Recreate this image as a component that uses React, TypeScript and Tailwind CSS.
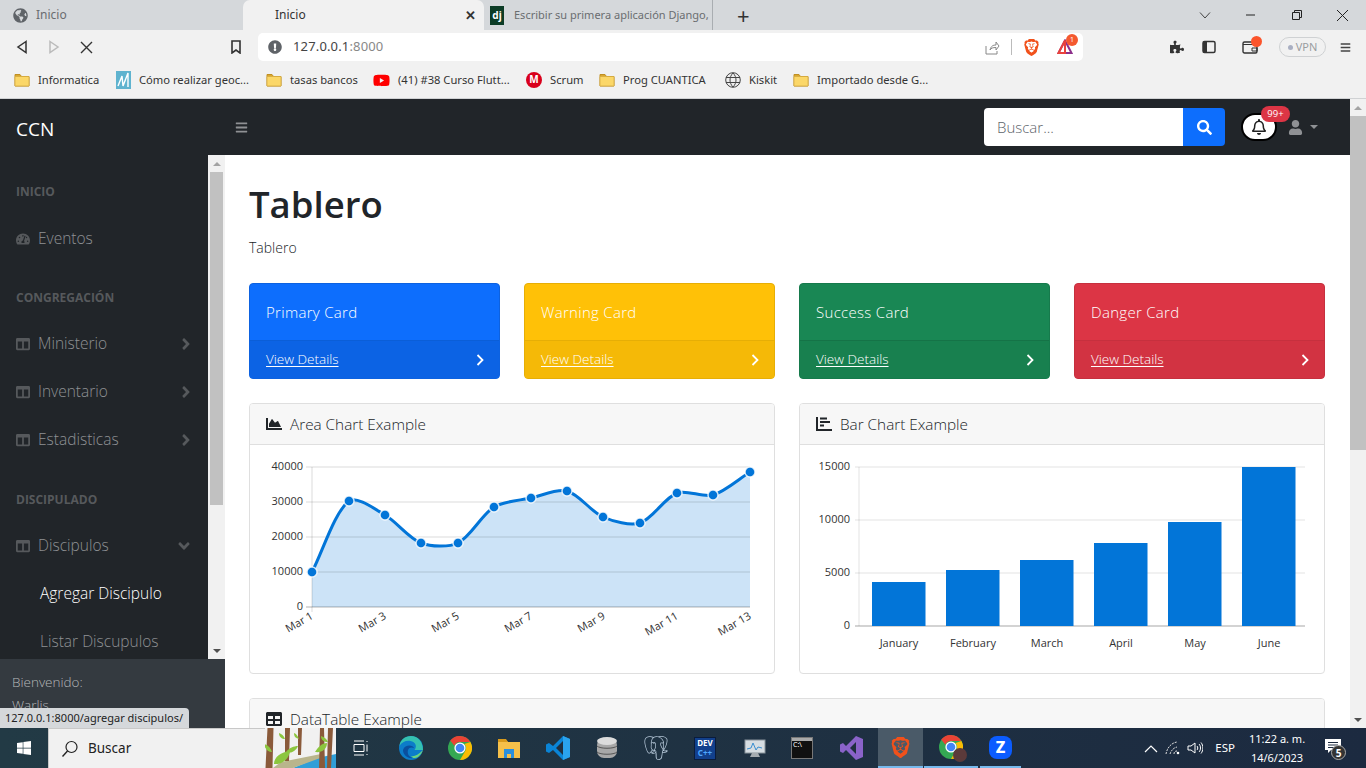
import { ReactNode } from "react";
import { FaAngleDown, FaAngleRight, FaBars, FaChartArea, FaColumns, FaExclamationCircle, FaGlobeAmericas, FaPuzzlePiece, FaRegBell, FaSearch, FaTable, FaTachometerAlt, FaUser, FaWindows, FaYoutube } from "react-icons/fa";
import { SiBrave, SiPostgresql } from "react-icons/si";

const UI_FONT = "font-['Noto_Sans',sans-serif]";

function Folder() {
  return (
    <svg width="16" height="14" viewBox="0 0 16 14" className="shrink-0">
      <path d="M1 1.5h5l1.5 2H15v9.5H1z" fill="#d9a832" stroke="#c08f22" strokeWidth="1" />
      <rect x="1" y="3.5" width="14" height="9.5" rx="0.5" fill="#fbd768" stroke="#d3a73c" strokeWidth="0.7" />
    </svg>
  );
}

function ChromeLogo({ size = 24 }: { size?: number }) {
  return (
    <svg width={size} height={size} viewBox="0 0 24 24">
      <circle cx="12" cy="12" r="12" fill="#34a853" />
      <path d="M12 0a12 12 0 0 1 10.4 6H12a6 6 0 0 0-5.6 3.7L2.2 4.6A12 12 0 0 1 12 0z" fill="#ea4335" />
      <path d="M22.4 6A12 12 0 0 1 12 24l5.2-9A6 6 0 0 0 16.5 8z" fill="#fbbc04" />
      <circle cx="12" cy="12" r="5.6" fill="#fff" />
      <circle cx="12" cy="12" r="4.3" fill="#4285f4" />
    </svg>
  );
}

const bookmarks = [
  { label: "Informatica", box: "w-[102px]", icon: <Folder /> },
  { label: "Cómo realizar geoc...", box: "w-[150px]", icon: (
    <svg width="15" height="18" viewBox="0 0 15 18" className="shrink-0"><rect width="15" height="18" fill="#5fb3cf" /><path d="M2 15 6 5l1 10 5-13v14" fill="none" stroke="#fff" strokeWidth="1.4" /></svg>
  ) },
  { label: "tasas bancos", box: "w-[107px]", icon: <Folder /> },
  { label: "(41) #38 Curso Flutt...", box: "w-[153px]", icon: <FaYoutube size={17} color="#f00" className="shrink-0" /> },
  { label: "Scrum", box: "w-[73px]", icon: (
    <span className="w-[16px] h-[16px] rounded-full bg-[#d9001b] text-white text-[10px] font-bold flex items-center justify-center shrink-0">M</span>
  ) },
  { label: "Prog CUANTICA", box: "w-[126px]", icon: <Folder /> },
  { label: "Kiskit", box: "w-[68px]", icon: (
    <svg width="16" height="16" viewBox="0 0 16 16" className="shrink-0"><circle cx="8" cy="8" r="7.300" fill="#eee" stroke="#444" /><path d="M1 5.500h14M1 10.500h14M8 1c-4 4-4 10 0 14M8 1c4 4 4 10 0 14" fill="none" stroke="#444" /></svg>
  ) },
  { label: "Importado desde G...", box: "w-[140px]", icon: <Folder /> },
];

function BrowserChrome() {
  return (
    <div className={`${UI_FONT} text-[#3c4043]`}>
      {/* Tabs */}
      <div className="h-[30px] bg-[#d5d8db] flex items-center text-[12px]">
        <div className="w-[243px] pl-[13px] flex items-center gap-[8px] text-[#6a6d70]">
          <FaGlobeAmericas size={15} color="#5f6368" />
          <span>Inicio</span>
        </div>
        <div className="w-[241px] h-[30px] bg-[#f1f1f1] rounded-t-[7px] pl-[32px] pr-[6px] flex items-center justify-between text-[#333]">
          <span>Inicio</span>
          <span className="text-[13px] font-semibold leading-none mr-[2px]">✕</span>
        </div>
        <div className="w-[229px] pl-[6px] flex items-center border-r border-[#a9adb1] h-[30px]">
          <span className="w-[14px] h-[19px] bg-[#0c3c26] text-white text-[10px] font-bold flex items-center justify-center shrink-0 leading-none">dj</span>
          <span className="ml-[10px] whitespace-nowrap text-[11px] text-[#6a6d70]">Escribir su primera aplicación Django,</span>
        </div>
        <span className="ml-[24px] text-[22px] leading-none font-normal text-[#333]">+</span>
        <div className="ml-auto flex items-center text-[#333]">
          <svg width="12" height="12" viewBox="0 0 12 12" className="mr-[34px]"><path d="M1 3.5 6 9l5-5.500" fill="none" stroke="#444" /></svg>
          <svg width="12" height="12" viewBox="0 0 12 12" className="mr-[34px]"><path d="M1 6h9" stroke="#222" /></svg>
          <svg width="12" height="12" viewBox="0 0 12 12" className="mr-[33px]"><path d="M1.500 3.500h7v7h-7zM3.500 3.500v-2h7v7h-2" fill="none" stroke="#222" /></svg>
          <svg width="13" height="13" viewBox="0 0 13 13" className="mr-[17px]"><path d="M1 1l11 11M12 1 1 12" stroke="#222" /></svg>
        </div>
      </div>

      {/* Toolbar */}
      <div className="h-[34px] bg-[#f1f1f1] flex items-center">
        <div className="w-[258px] flex items-center">
          <svg width="12" height="14" viewBox="0 0 12 14" className="ml-[16px]"><path d="M10 1.500 2 7l8 5.500z" fill="none" stroke="#333" strokeWidth="1.500" /></svg>
          <svg width="12" height="14" viewBox="0 0 12 14" className="ml-[20px]"><path d="M2 1.500 10 7l-8 5.500z" fill="none" stroke="#bbb" strokeWidth="1.500" /></svg>
          <svg width="13" height="13" viewBox="0 0 13 13" className="ml-[20px]"><path d="M1 1l11 11M12 1 1 12" stroke="#333" strokeWidth="1.400" /></svg>
          <svg width="10" height="14" viewBox="0 0 10 14" className="ml-[138px]"><path d="M1 1h8v12L5 10l-4 3z" fill="none" stroke="#333" strokeWidth="1.600" /></svg>
        </div>
        <div className="w-[825px] h-[28px] bg-white rounded-[5px] flex items-center pl-[10px] pr-[10px]">
          <FaExclamationCircle size={14} color="#5f6368" />
          <span className="ml-[11px] text-[13px] tracking-[0.15px] text-[#444]">127.0.0.1<span className="text-[#888]">:8000</span></span>
          <svg width="15" height="15" viewBox="0 0 15 15" className="ml-auto"><path d="M1 6v8h11v-3M5 10c1-4 3-5 6-5V2l3 4-3 4V7.500C8 7.500 6 8 5 10z" fill="none" stroke="#888" /></svg>
          <span className="w-[1px] h-[16px] bg-[#bbb] ml-[11px]" />
          <SiBrave size={17} color="#f1511b" className="ml-[11px]" />
          <span className="relative ml-[17px] w-[16px] h-[16px]">
            <svg width="16" height="15" viewBox="0 0 16 15"><path d="M8 1.500 14.500 14h-13z" fill="#fff" stroke="#8c2f8a" strokeWidth="2" /><path d="M8 1.500 1.500 14H8z" fill="none" stroke="#e8423d" strokeWidth="2" /></svg>
            <span className="absolute -top-[5px] left-[9px] w-[12px] h-[12px] rounded-full bg-[#f4592f] text-white text-[7px] flex items-center justify-center">1</span>
          </span>
        </div>
        <div className="flex-1 flex items-center relative">
          <FaPuzzlePiece size={14} color="#333" className="ml-[87px]" />
          <svg width="14" height="14" viewBox="0 0 14 14" className="ml-[18px]"><rect x="1" y="1.500" width="12" height="11" rx="1.500" fill="none" stroke="#333" strokeWidth="1.500" /><rect x="1" y="1.500" width="4" height="11" fill="#333" /></svg>
          <span className="relative ml-[26px]">
            <svg width="16" height="14" viewBox="0 0 16 14" className="block"><rect x="1" y="2" width="14" height="11" rx="1.500" fill="none" stroke="#333" strokeWidth="1.400" /><path d="M1 4.500h14M10 8h5v3h-5z" fill="none" stroke="#333" /></svg>
            <span className="absolute -top-[4px] left-[9px] w-[11px] h-[11px] rounded-full bg-[#fb542b]" />
          </span>
          <span className="ml-[21px] w-[47px] h-[20px] rounded-full border border-[#cfd1d3] flex items-center justify-center gap-[3px] text-[11px] text-[#9a9da0]">
            <span className="w-[5px] h-[5px] rounded-full bg-[#a9afc2]" />VPN
          </span>
          <FaBars size={11} color="#444" className="ml-[14px]" />
        </div>
      </div>

      {/* Bookmarks */}
      <div className="h-[34px] bg-[#f1f1f1] flex items-center pl-[14px] pb-[2px] text-[11.200px] text-[#333]">
        {bookmarks.map((b) => (
          <div key={b.label} className={`${b.box} flex items-center gap-[8px] whitespace-nowrap`}>
            {b.icon}
            <span>{b.label}</span>
          </div>
        ))}
      </div>
      <div className="h-[1px] bg-[#d0d2d4]" />
    </div>
  );
}

function SideHeading({ label, className }: { label: string; className: string }) {
  return <div className={`${className} px-[16px] text-[12px] font-bold uppercase text-[#56595c]`}>{label}</div>;
}

function SideLink({ label, arrow }: { label: string; arrow?: "right" | "down" }) {
  return (
    <div className="h-[48px] pl-[16px] pr-[16px] flex items-center text-[#8f9194]">
      {label === "Eventos" ? <FaTachometerAlt size={14} color="#56595c" /> : <FaColumns size={14} color="#56595c" />}
      <span className="ml-[8px]">{label}</span>
      {arrow === "right" && <FaAngleRight size={18} color="#56595c" className="ml-auto -mr-[3px]" />}
      {arrow === "down" && <FaAngleDown size={18} color="#56595c" className="ml-auto -mr-[1px]" />}
    </div>
  );
}

function Sidebar() {
  return (
    <div className="w-[225px] bg-[#212529] flex flex-col shrink-0">
      <div className="flex h-[504px]">
        <nav className="w-[208px] overflow-hidden text-[15.500px] font-light">
          <SideHeading label="Inicio" className="h-[60px] pt-[28px]" />
          <SideLink label="Eventos" />
          <SideHeading label="Congregación" className="h-[57px] pt-[26px]" />
          <SideLink label="Ministerio" arrow="right" />
          <SideLink label="Inventario" arrow="right" />
          <SideLink label="Estadisticas" arrow="right" />
          <SideHeading label="Discipulado" className="h-[58px] pt-[27px]" />
          <SideLink label="Discipulos" arrow="down" />
          <div className="h-[48px] pl-[40px] flex items-center text-white">Agregar Discipulo</div>
          <div className="h-[48px] pl-[40px] flex items-center text-[#8f9194]">Listar Discupulos</div>
        </nav>
        <ScrollBar thumb="h-[333px] mx-[2px]" width="w-[17px]" />
      </div>
      <div className="flex-1 bg-[#343a40] px-[12px] pt-[12px] text-[13.500px] leading-[23px] font-light text-[#b5b7b9] overflow-hidden">
        <div>Bienvenido:</div>
        <div>Warlis</div>
      </div>
    </div>
  );
}

function ScrollBar({ thumb, width }: { thumb: string; width: string }) {
  return (
    <div className={`${width} bg-[#f1f1f1] flex flex-col shrink-0`}>
      <div className="h-[17px] flex items-center justify-center"><span className="border-x-[4px] border-x-transparent border-b-[4px] border-b-[#a3a3a3]" /></div>
      <div className={`${thumb} bg-[#c1c1c1]`} />
      <div className="flex-1" />
      <div className="h-[17px] flex items-center justify-center"><span className="border-x-[4px] border-x-transparent border-t-[4px] border-t-[#505050]" /></div>
    </div>
  );
}

const statCards = [
  { label: "Primary Card", box: "bg-[#0d6efd] border-[#0d62e0]", foot: "bg-[#0c63e4] border-[#0b5ed7]" },
  { label: "Warning Card", box: "bg-[#ffc107] border-[#e6ae06]", foot: "bg-[#f5b907] border-[#e6ae06]" },
  { label: "Success Card", box: "bg-[#198754] border-[#167a4c]", foot: "bg-[#18804f] border-[#157347]" },
  { label: "Danger Card", box: "bg-[#dc3545] border-[#c6303e]", foot: "bg-[#d23342] border-[#c6303e]" },
];

function StatCard({ label, box, foot }: { label: string; box: string; foot: string }) {
  return (
    <div className={`${box} border rounded-[4px] h-[96px] text-white flex flex-col overflow-hidden`}>
      <div className="flex-1 px-[16px] pt-[1px] flex items-center text-[15px] font-light tracking-[0.3px]">{label}</div>
      <div className={`${foot} border-t h-[38px] px-[16px] flex items-center justify-between text-[13.500px]`}>
        <span className="underline underline-offset-2 font-light">View Details</span>
        <svg width="8" height="12" viewBox="0 0 8 12" className="-mr-[1px]"><path d="M1.500 1 6.500 6l-5 5" fill="none" stroke="#fff" strokeWidth="1.800" /></svg>
      </div>
    </div>
  );
}

function ChartCard({ icon, title, children }: { icon: ReactNode; title: string; children: ReactNode }) {
  return (
    <div className="border border-[#dfdfdf] rounded-[4px] h-[271px] overflow-hidden">
      <div className="h-[41px] bg-[#f7f7f7] border-b border-[#dfdfdf] px-[16px] flex items-center gap-[8px] text-[15.300px] font-light text-[#212529]">
        {icon}
        <span>{title}</span>
      </div>
      {children}
    </div>
  );
}

const areaData = [[312, 572], [349, 501], [385, 515], [421, 543], [458, 543], [494, 507], [531, 498], [567, 491], [603, 517], [640, 523], [677, 493], [713, 495], [750, 472]];

function smoothPath(pts: number[][], t = 0.3) {
  const ctrl = pts.map((p, i) => {
    const a = pts[i - 1] ?? p;
    const b = pts[i + 1] ?? p;
    const d1 = Math.hypot(p[0] - a[0], p[1] - a[1]);
    const d2 = Math.hypot(b[0] - p[0], b[1] - p[1]);
    const s = d1 + d2 || 1;
    return {
      prev: [p[0] - (t * d1 / s) * (b[0] - a[0]), p[1] - (t * d1 / s) * (b[1] - a[1])],
      next: [p[0] + (t * d2 / s) * (b[0] - a[0]), p[1] + (t * d2 / s) * (b[1] - a[1])],
    };
  });
  let d = `M${pts[0][0]} ${pts[0][1]}`;
  for (let i = 1; i < pts.length; i++) {
    d += `C${ctrl[i - 1].next[0]} ${ctrl[i - 1].next[1]} ${ctrl[i].prev[0]} ${ctrl[i].prev[1]} ${pts[i][0]} ${pts[i][1]}`;
  }
  return d;
}

function AreaChart() {
  const line = smoothPath(areaData);
  const ticks = [[467, "40000"], [502, "30000"], [537, "20000"], [572, "10000"], [607, "0"]] as const;
  const labels = [[312, "Mar 1"], [385, "Mar 3"], [458, "Mar 5"], [531, "Mar 7"], [604, "Mar 9"], [677, "Mar 11"], [750, "Mar 13"]] as const;
  return (
    <svg width="524" height="228" viewBox="250 445 524 228" className="block font-['Open_Sans',sans-serif]">
      <path d={`${line}L750 607L312 607Z`} fill="#0275d8" fillOpacity="0.2" />
      {ticks.map(([y, t]) => (
        <g key={t}>
          <line x1="306" x2="750" y1={y} y2={y} stroke="#000" strokeOpacity={t === "0" ? 0.3 : 0.14} />
          <text x="303" y={y + 3} textAnchor="end" fontSize="11" fill="#333">{t}</text>
        </g>
      ))}
      <line x1="312" x2="312" y1="467" y2="612" stroke="#000" strokeOpacity="0.14" />
      {labels.map(([x, t]) => (
        <text key={t} x={x + 2} y={618} textAnchor="end" fontSize="11" fill="#333" transform={`rotate(-30 ${x + 2} 618)`}>{t}</text>
      ))}
      <path d={line} fill="none" stroke="#0275d8" strokeWidth="3" />
      {areaData.map(([x, y]) => (
        <circle key={x} cx={x} cy={y} r="5" fill="#0275d8" stroke="#fff" strokeOpacity="0.8" strokeWidth="1.500" />
      ))}
    </svg>
  );
}

function BarChart() {
  const ticks = [[467, "15000"], [520, "10000"], [573, "5000"], [626, "0"]] as const;
  const bars = [[872, 582, "January"], [946, 570, "February"], [1020, 560, "March"], [1094, 543, "April"], [1168, 522, "May"], [1242, 467, "June"]] as const;
  return (
    <svg width="524" height="228" viewBox="800 445 524 228" className="block font-['Open_Sans',sans-serif]">
      {ticks.map(([y, t]) => (
        <g key={t}>
          <line x1="855" x2="1305" y1={y} y2={y} stroke="#000" strokeOpacity={t === "0" ? 0.35 : 0.11} />
          <text x="850" y={y + 3} textAnchor="end" fontSize="11" fill="#333">{t}</text>
        </g>
      ))}
      <line x1="859" x2="859" y1="467" y2="626" stroke="#000" strokeOpacity="0.11" />
      {bars.map(([x, y, t]) => (
        <g key={t}>
          <rect x={x} y={y} width="53.500" height={626 - y} fill="#0275d8" />
          <text x={x + 27} y="647" textAnchor="middle" fontSize="11" fill="#333">{t}</text>
        </g>
      ))}
    </svg>
  );
}

function Main() {
  return (
    <main className="flex-1 bg-white pl-[24px] pr-[25px] overflow-hidden font-['Open_Sans',sans-serif] text-[#212529]">
      <h1 className="text-[36.500px] leading-[46px] font-semibold mt-[26px]">Tablero</h1>
      <p className="text-[14px] font-light leading-[20px] mt-[11px]">Tablero</p>
      <div className="grid grid-cols-4 gap-[24px] mt-[25px]">
        {statCards.map((c) => <StatCard key={c.label} {...c} />)}
      </div>
      <div className="grid grid-cols-2 gap-[24px] mt-[24px]">
        <ChartCard icon={<FaChartArea size={16} />} title="Area Chart Example"><AreaChart /></ChartCard>
        <ChartCard
          icon={<svg width="16" height="14" viewBox="0 0 16 14"><path d="M1 0v13h15" fill="none" stroke="#212529" strokeWidth="2" /><path d="M4 1.500h7M4 5h10M4 8.500h4" stroke="#212529" strokeWidth="2" /></svg>}
          title="Bar Chart Example"
        ><BarChart /></ChartCard>
      </div>
      <div className="mt-[24px]">
        <ChartCard icon={<FaTable size={16} />} title="DataTable Example"><div /></ChartCard>
      </div>
    </main>
  );
}

function TrayTree() {
  return (
    <svg width="71" height="40" viewBox="0 0 71 40" className="block">
      <rect width="71" height="40" fill="#f1f1f1" />
      <path d="M28 40 52 30 71 26v14z" fill="#2f9fd8" />
      <path d="M8 40 16 34l40-8 2 3-30 11z" fill="#b9b58c" />
      <path d="M2.500 0h6l-1 40h-7zM20 0h5l-1 33h-4zM33 0h4l-1 27h-3zM55 0h4l1 40h-6zM63 0h5l-2 40h-4z" fill="#8a5a3a" />
      <path d="M-1 16c4 1 7 4 8 8-4 0-7-3-8-8zM9 36c0-7 7-12 16-13-1 8-8 14-16 13zM21 24c3-4 8-6 12-6-2 5-7 8-12 6zM14 5c3 1 5 3 6 6-3 0-6-2-6-6zM29 5c3 1 4 4 5 6-3-1-5-2-5-6zM50 24c3-5 7-9 12-9 0 6-5 10-12 9zM56 8c3 1 6 3 7 6-4 0-7-2-7-6z" fill="#8cc63f" />
    </svg>
  );
}

function Taskbar() {
  return (
    <div className={`${UI_FONT} h-[40px] bg-gradient-to-r from-[#223a45] to-[#1c2a40] flex items-center text-white shrink-0`}>
      <div className="w-[48px] flex justify-center"><FaWindows size={16} /></div>
      <div className="w-[217px] h-[40px] bg-[#f1f1f1] flex items-center text-[#222] text-[13.500px] pl-[12px] border-t border-l border-[#c8c8c8]">
        <svg width="18" height="18" viewBox="0 0 18 18"><circle cx="10.500" cy="7" r="5.500" fill="none" stroke="#222" strokeWidth="1.200" /><path d="M6.500 11 1.500 16.500" stroke="#222" strokeWidth="1.400" /></svg>
        <span className="ml-[9px]">Buscar</span>
      </div>
      <TrayTree />
      <div className="w-[50px] flex justify-center">
        <svg width="16" height="16" viewBox="0 0 16 16"><path d="M1 1h10M1 15h10M1 4.500h10v7H1zM14 1v1M14 4.500v7M14 14v1" fill="none" stroke="#fff" /></svg>
      </div>
      <div className="w-[49px] flex justify-center">
        <svg width="24" height="24" viewBox="0 0 24 24"><circle cx="12" cy="12" r="12" fill="#0c7cc9" /><path d="M24 14c0-8-5-14-12-14C6 0 1 4 .500 10c2-4 7-6 11-5 5 1 7 5 4 9z" fill="#35c1b0" /><path d="M24 14c-1 3-3 5-5 7-3 2-6 1-7-1 3 1 7-1 12-6z" fill="#6dd47e" /><path d="M4 14c0 5 5 9 10 8-4-1-6-4-5-8 1-3 4-3 6-2-1-3-9-4-11 2z" fill="#0a4f9e" /></svg>
      </div>
      <div className="w-[50px] flex justify-center"><ChromeLogo /></div>
      <div className="w-[48px] flex justify-center">
        <svg width="22" height="19" viewBox="0 0 22 19"><path d="M0 1h8l2 2h12v16H0z" fill="#f5c04a" /><path d="M0 0h8l2 3H0z" fill="#d89a1c" /><path d="M6 10h10v9h-3v-4H9v4H6z" fill="#2b8fdc" /></svg>
      </div>
      <div className="w-[49px] flex justify-center">
        <svg width="24" height="24" viewBox="0 0 24 24"><path d="M17 0 24 3v18l-7 3L7 14l-4 3-3-1.500v-7L3 7l4 3z" fill="#0a84d6" /><path d="M17 5v14l-7-7z" fill="#1f2f3f" /><path d="M17 0 24 3v18l-7 3z" fill="#2aa3ee" /></svg>
      </div>
      <div className="w-[49px] flex justify-center">
        <svg width="22" height="24" viewBox="0 0 22 24"><rect x="1" y="2" width="20" height="20" rx="7" fill="#a8a8a8" /><ellipse cx="11" cy="5" rx="10" ry="4" fill="#dcdcdc" /><path d="M1 10c3 3 17 3 20 0M1 16c3 3 17 3 20 0" fill="none" stroke="#555" /></svg>
      </div>
      <div className="w-[49px] flex justify-center"><SiPostgresql size={24} color="#b5c7d8" /></div>
      <div className="w-[50px] flex justify-center">
        <div className="w-[22px] h-[23px] bg-[#12408c] border border-[#0a1c3c] text-center text-[8px] leading-[10px] font-bold"><div>DEV</div><div className="text-[#4ea7ff]">C++</div></div>
      </div>
      <div className="w-[49px] flex justify-center">
        <svg width="22" height="22" viewBox="0 0 22 22"><rect x="1" y="3" width="20" height="13" fill="#d6dde2" stroke="#8a949b" /><path d="M3 12l4-1 2-5 3 7 2-3 4 1" fill="none" stroke="#3a8ed0" /><path d="M8 16h6l2 4H6z" fill="#a5acb1" /></svg>
      </div>
      <div className="w-[46px] flex justify-center">
        <div className="w-[22px] h-[22px] bg-[#111] border border-[#777] text-[7px] leading-[8px] pl-[1px]"><div className="h-[3px] bg-[#aaa] -ml-[1px]" />C:\</div>
      </div>
      <div className="w-[53px] flex justify-center">
        <svg width="23" height="24" viewBox="0 0 23 24"><path d="M16 0l7 3v18l-7 3L6 14l-3 3-3-1.500v-7L3 7l3 3z" fill="#8a63c9" /><path d="M16 6v12l-6-6z" fill="#1f2f3f" /></svg>
      </div>
      <div className="w-[45px] h-[40px] bg-[#4a5a68] border-b-[2px] border-[#76b9ed] flex justify-center items-center"><SiBrave size={21} color="#f1511b" /></div>
      <div className="w-[54px] h-[40px] flex justify-center items-center ml-[1px] border-b-[2px] border-[#76b9ed] relative">
        <ChromeLogo />
        <span className="absolute left-[29px] top-[20px] w-[14px] h-[14px] rounded-full bg-[#5b3a3a]" />
      </div>
      <div className="w-[41px] h-[40px] flex justify-center items-center border-b-[2px] border-[#76b9ed] ml-[2px]">
        <div className="w-[23px] h-[23px] bg-[#0b5cff] rounded-[8px] flex items-center justify-center text-[16px] font-extrabold leading-none">Z</div>
      </div>
      <div className="ml-auto flex items-center">
        <svg width="14" height="9" viewBox="0 0 14 9" className="mr-[7px]"><path d="M1 8l6-6 6 6" fill="none" stroke="#fff" strokeWidth="1.200" /></svg>
        <svg width="16" height="14" viewBox="0 0 16 14" className="mr-[6px]"><path d="M1 13C2 7 6 2 12 1M5 13c1-3 3-6 7-7M9 13c0-2 1-3 3-3" fill="none" stroke="#ddd" strokeDasharray="2 1" /><circle cx="13" cy="12" r="1.300" fill="#fff" /></svg>
        <svg width="16" height="14" viewBox="0 0 16 14" className="mr-[12px]"><path d="M1 5h3l4-3v10L4 9H1zM10 5c1 1 1 3 0 4M12 3c2 2 2 6 0 8M14 1.500c2.500 3 2.500 8 0 11" fill="none" stroke="#fff" /></svg>
        <span className="text-[11.500px] mr-[16px]">ESP</span>
        <div className="text-[11px] leading-[19px] text-center w-[52px] mr-[22px] whitespace-nowrap flex flex-col items-center"><span>11:22 a. m.</span><span>14/6/2023</span></div>
        <div className="relative mr-[23px] w-[18px] h-[18px]">
          <svg width="16" height="15" viewBox="0 0 16 15" className="block"><path d="M0 0h16v11H6l-3 3v-3H0z" fill="#fff" /><path d="M3 3.500h10M3 6h10M3 8.500h7" stroke="#1c2a40" /></svg>
          <span className="absolute left-[6px] top-[6px] w-[15px] h-[15px] rounded-full bg-[#333] border border-[#aaa] text-[10px] font-bold leading-none flex items-center justify-center">5</span>
        </div>
      </div>
    </div>
  );
}

export default function App() {
  return (
    <div className="w-[1366px] h-[768px] flex flex-col overflow-hidden bg-white">
      <BrowserChrome />
      <div className="flex-1 flex min-h-0 relative font-['Open_Sans',sans-serif]">
        <div className="flex-1 flex flex-col min-w-0">
          <header className="h-[56px] bg-[#212529] flex items-center shrink-0">
            <span className="ml-[16px] mt-[4px] text-[19px] text-white">CCN</span>
            <FaBars size={13} color="#8f9194" className="ml-[181px]" />
            <div className="ml-auto flex h-[38px] w-[241px] rounded-[4px] overflow-hidden">
              <div className="flex-1 bg-white pl-[13px] flex items-center text-[15px] font-light text-[#5c636a]">Buscar...</div>
              <div className="w-[42px] bg-[#0d6efd] flex items-center justify-center"><FaSearch size={15} color="#fff" /></div>
            </div>
            <div className="relative ml-[16px] w-[36px] h-[28px] rounded-[14px] bg-white border-[2px] border-black flex items-center justify-center">
              <FaRegBell size={16} color="#222" />
              <span className="absolute -top-[9px] left-[18px] h-[16px] w-[29px] rounded-full bg-[#dc3545] text-white text-[9.500px] flex items-center justify-center">99+</span>
            </div>
            <FaUser size={15} color="#8f9194" className="ml-[11px]" />
            <span className="ml-[7px] mr-[32px] border-x-[4px] border-x-transparent border-t-[4px] border-t-[#8f9194]" />
          </header>
          <div className="flex-1 flex min-h-0">
            <Sidebar />
            <Main />
          </div>
        </div>
        <ScrollBar thumb="h-[334px]" width="w-[16px]" />
        <div className={`${UI_FONT} absolute left-0 bottom-0 h-[20px] w-[189px] bg-[#d5d8db] rounded-tr-[4px] text-[11px] text-[#222] px-[5px] flex items-center whitespace-nowrap`}>127.0.0.1:8000/agregar discipulos/</div>
      </div>
      <Taskbar />
    </div>
  );
}
